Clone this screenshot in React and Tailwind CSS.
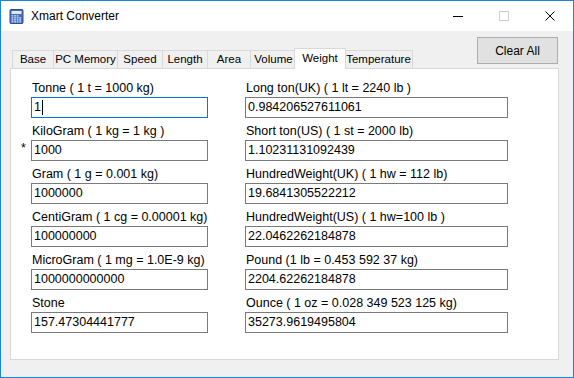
import React from "react";

const tabs = [
  { name: "Base", w: 42 },
  { name: "PC Memory", w: 65 },
  { name: "Speed", w: 46 },
  { name: "Length", w: 46 },
  { name: "Area", w: 44 },
  { name: "Volume", w: 47 },
  { name: "Weight", w: 48, active: true },
  { name: "Temperature", w: 69 },
];

const leftRows = [
  { label: "Tonne ( 1 t = 1000 kg)", value: "1", focus: true },
  { label: "KiloGram ( 1 kg = 1 kg )", value: "1000", star: true },
  { label: "Gram ( 1 g = 0.001 kg)", value: "1000000" },
  { label: "CentiGram ( 1 cg = 0.00001 kg)", value: "100000000" },
  { label: "MicroGram ( 1 mg = 1.0E-9 kg)", value: "1000000000000" },
  { label: "Stone", value: "157.47304441777" },
];

const rightRows = [
  { label: "Long ton(UK) ( 1 lt = 2240  lb )", value: "0.984206527611061" },
  { label: "Short ton(US) ( 1 st = 2000 lb)", value: "1.10231131092439" },
  { label: "HundredWeight(UK) ( 1 hw = 112 lb)", value: "19.6841305522212" },
  { label: "HundredWeight(US) ( 1 hw=100 lb )", value: "22.0462262184878" },
  { label: "Pound (1 lb = 0.453 592 37 kg)", value: "2204.62262184878" },
  { label: "Ounce ( 1 oz = 0.028 349 523 125 kg)", value: "35273.9619495804" },
];

function CalcIcon() {
  return (
    <svg width="15" height="15" viewBox="0 0 15 15">
      <rect x="1" y="0.5" width="13" height="14" rx="1" fill="#3f6fc4" stroke="#2a4f94" />
      <rect x="2.5" y="2" width="10" height="3" fill="#dfe9f7" />
      {[0, 1, 2, 3].map((r) =>
        [0, 1, 2, 3].map((c) => (
          <rect
            key={r + "-" + c}
            x={2.5 + c * 2.6}
            y={6.2 + r * 2}
            width="1.8"
            height="1.3"
            fill={r === 0 && c === 3 ? "#e0403a" : "#d4dcea"}
          />
        ))
      )}
    </svg>
  );
}

function Field({ label, value, focus, wide }) {
  return (
    <div className="flex flex-col">
      <div className="h-[22px] flex items-end pb-[1px] pl-[1px] leading-[16px] text-[12.5px] text-black whitespace-nowrap">
        {label}
      </div>
      <div
        className={`h-[21px] ${wide ? "w-[263px]" : "w-[177px]"} bg-white border ${
          focus ? "border-[#0078d7]" : "border-[#7a7a7a]"
        } flex items-center pl-[2px] text-[12.5px] text-black`}
      >
        <span>{value}</span>
        {focus && <span className="inline-block w-[1px] h-[15px] bg-black ml-[1px]" />}
      </div>
    </div>
  );
}

export default function App() {
  return (
    <div
      className="w-[574px] h-[378px] border border-[#1883d7] flex flex-col bg-[#f0f0f0] overflow-hidden"
      style={{ fontFamily: '"Liberation Sans", Arial, sans-serif' }}
    >
      {/* title bar */}
      <div className="h-[30px] bg-white flex items-center shrink-0">
        <div className="pl-[8px] pr-[7px] flex items-center">
          <CalcIcon />
        </div>
        <div className="text-[12px] text-black flex-1">Xmart Converter</div>
        <div className="flex h-full">
          <div className="w-[46px] flex items-center justify-center">
            <svg width="10" height="10" viewBox="0 0 10 10">
              <path d="M0 5.5h10" stroke="#000" strokeWidth="1" />
            </svg>
          </div>
          <div className="w-[46px] flex items-center justify-center">
            <svg width="10" height="10" viewBox="0 0 10 10">
              <rect x="0.5" y="0.5" width="9" height="9" fill="none" stroke="#cccccc" />
            </svg>
          </div>
          <div className="w-[46px] flex items-center justify-center">
            <svg width="10" height="10" viewBox="0 0 10 10">
              <path d="M0.5 0.5l9 9M9.5 0.5l-9 9" stroke="#000" strokeWidth="1" />
            </svg>
          </div>
        </div>
      </div>

      {/* body */}
      <div className="flex-1 flex flex-col pl-[9px] pr-[14px]">
        <div className="h-[37px] flex justify-between">
          <div className="flex items-end pl-[2px]">
            {tabs.map((t) =>
              t.active ? (
                <div
                  key={t.name}
                  className="h-[21px] -mb-[1px] -mx-[2px] relative z-10 bg-white border border-b-0 border-[#d9d9d9] flex items-start justify-center pt-[1px] text-[11.5px] text-black"
                  style={{ width: t.w + 4 }}
                >
                  {t.name}
                </div>
              ) : (
                <div
                  key={t.name}
                  className="h-[18px] border-t border-l border-r -mr-[1px] border-[#d9d9d9] bg-[#f0f0f0] flex items-center justify-center text-[11.5px] text-black"
                  style={{ width: t.w }}
                >
                  {t.name}
                </div>
              )
            )}
          </div>
          <button className="mt-[6px] mr-[1px] w-[81px] h-[27px] bg-[#e1e1e1] border border-[#adadad] text-[12px] text-black">
            Clear All
          </button>
        </div>

        <div className="h-[292px] bg-white border border-[#d9d9d9] flex pt-[6px] pl-[8px]">
          <div className="flex flex-col">
            {leftRows.map((r) => (
              <div key={r.label} className="flex items-end">
                <div className="w-[12px] h-[21px] pl-[2px] text-[12.5px] leading-[17px] text-black">
                  {r.star ? "*" : ""}
                </div>
                <Field label={r.label} value={r.value} focus={r.focus} />
              </div>
            ))}
          </div>
          <div className="flex flex-col ml-[37px]">
            {rightRows.map((r) => (
              <Field key={r.label} label={r.label} value={r.value} wide />
            ))}
          </div>
        </div>
      </div>
    </div>
  );
}
